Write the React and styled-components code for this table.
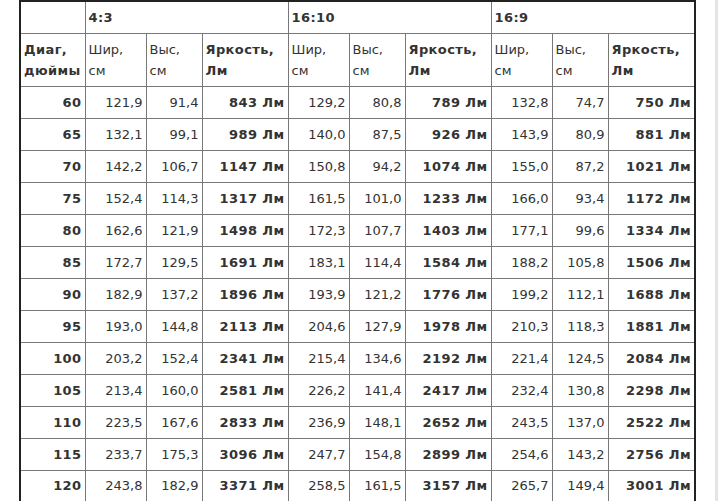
import React from "react";
import styled, { createGlobalStyle } from "styled-components";

const Global = createGlobalStyle`
  html, body { margin: 0; padding: 0; background: #fff; overflow: hidden; }
  body { font-family: Verdana, "DejaVu Sans", sans-serif; color: #333; }
`;

const Page = styled.div`
  display: grid;
  grid-template-columns: 19px 677px 1fr 3px;
  height: 501px;
  overflow: hidden;
`;

const Scroll = styled.div`
  grid-column: 4;
  background: #e5e5e2;
`;

const Table = styled.table`
  grid-column: 2;
  align-self: start;
  border-collapse: collapse;
  table-layout: fixed;
  width: 677px;
  border: 2px solid #222;
  font-size: 13px;
`;

const Cell = styled.td`
  border: 1px solid #777;
  padding: 0 3px;
  text-align: ${(p) => (p.$right ? "right" : "left")};
  font-weight: ${(p) => (p.$bold ? "bold" : "normal")};
  letter-spacing: ${(p) => (p.$bold ? "0.4px" : "0")};
  vertical-align: middle;
  white-space: nowrap;
  line-height: 21px;
`;

const GroupRow = styled.tr`
  height: 32px;
`;

const HeadRow = styled.tr`
  height: 53px;
`;

const DataRow = styled.tr`
  height: 32px;
`;

const widths = [65, 61, 56, 86, 61, 56, 86, 61, 56, 87];

const rows = [
  ["60", "121,9", "91,4", "843", "129,2", "80,8", "789", "132,8", "74,7", "750"],
  ["65", "132,1", "99,1", "989", "140,0", "87,5", "926", "143,9", "80,9", "881"],
  ["70", "142,2", "106,7", "1147", "150,8", "94,2", "1074", "155,0", "87,2", "1021"],
  ["75", "152,4", "114,3", "1317", "161,5", "101,0", "1233", "166,0", "93,4", "1172"],
  ["80", "162,6", "121,9", "1498", "172,3", "107,7", "1403", "177,1", "99,6", "1334"],
  ["85", "172,7", "129,5", "1691", "183,1", "114,4", "1584", "188,2", "105,8", "1506"],
  ["90", "182,9", "137,2", "1896", "193,9", "121,2", "1776", "199,2", "112,1", "1688"],
  ["95", "193,0", "144,8", "2113", "204,6", "127,9", "1978", "210,3", "118,3", "1881"],
  ["100", "203,2", "152,4", "2341", "215,4", "134,6", "2192", "221,4", "124,5", "2084"],
  ["105", "213,4", "160,0", "2581", "226,2", "141,4", "2417", "232,4", "130,8", "2298"],
  ["110", "223,5", "167,6", "2833", "236,9", "148,1", "2652", "243,5", "137,0", "2522"],
  ["115", "233,7", "175,3", "3096", "247,7", "154,8", "2899", "254,6", "143,2", "2756"],
  ["120", "243,8", "182,9", "3371", "258,5", "161,5", "3157", "265,7", "149,4", "3001"],
];

const groups = ["4:3", "16:10", "16:9"];

export default function App() {
  return (
    <>
      <Global />
      <Page>
        <Table>
          <colgroup>
            {widths.map((w, i) => (
              <col key={i} style={{ width: w }} />
            ))}
          </colgroup>
          <tbody>
            <GroupRow>
              <Cell />
              {groups.map((g) => (
                <Cell key={g} colSpan={3} $bold>
                  {g}
                </Cell>
              ))}
            </GroupRow>
            <HeadRow>
              <Cell $bold>
                Диаг,
                <br />
                дюймы
              </Cell>
              {groups.map((g) => (
                <React.Fragment key={g}>
                  <Cell>
                    Шир,
                    <br />
                    см
                  </Cell>
                  <Cell>
                    Выс,
                    <br />
                    см
                  </Cell>
                  <Cell $bold>
                    Яркость,
                    <br />
                    Лм
                  </Cell>
                </React.Fragment>
              ))}
            </HeadRow>
            {rows.map((r) => (
              <DataRow key={r[0]}>
                {r.map((v, i) => {
                  const bold = i === 0 || i % 3 === 0;
                  const text = i > 0 && i % 3 === 0 ? `${v} Лм` : v;
                  return (
                    <Cell key={i} $right $bold={bold}>
                      {text}
                    </Cell>
                  );
                })}
              </DataRow>
            ))}
          </tbody>
        </Table>
        <Scroll />
      </Page>
    </>
  );
}
